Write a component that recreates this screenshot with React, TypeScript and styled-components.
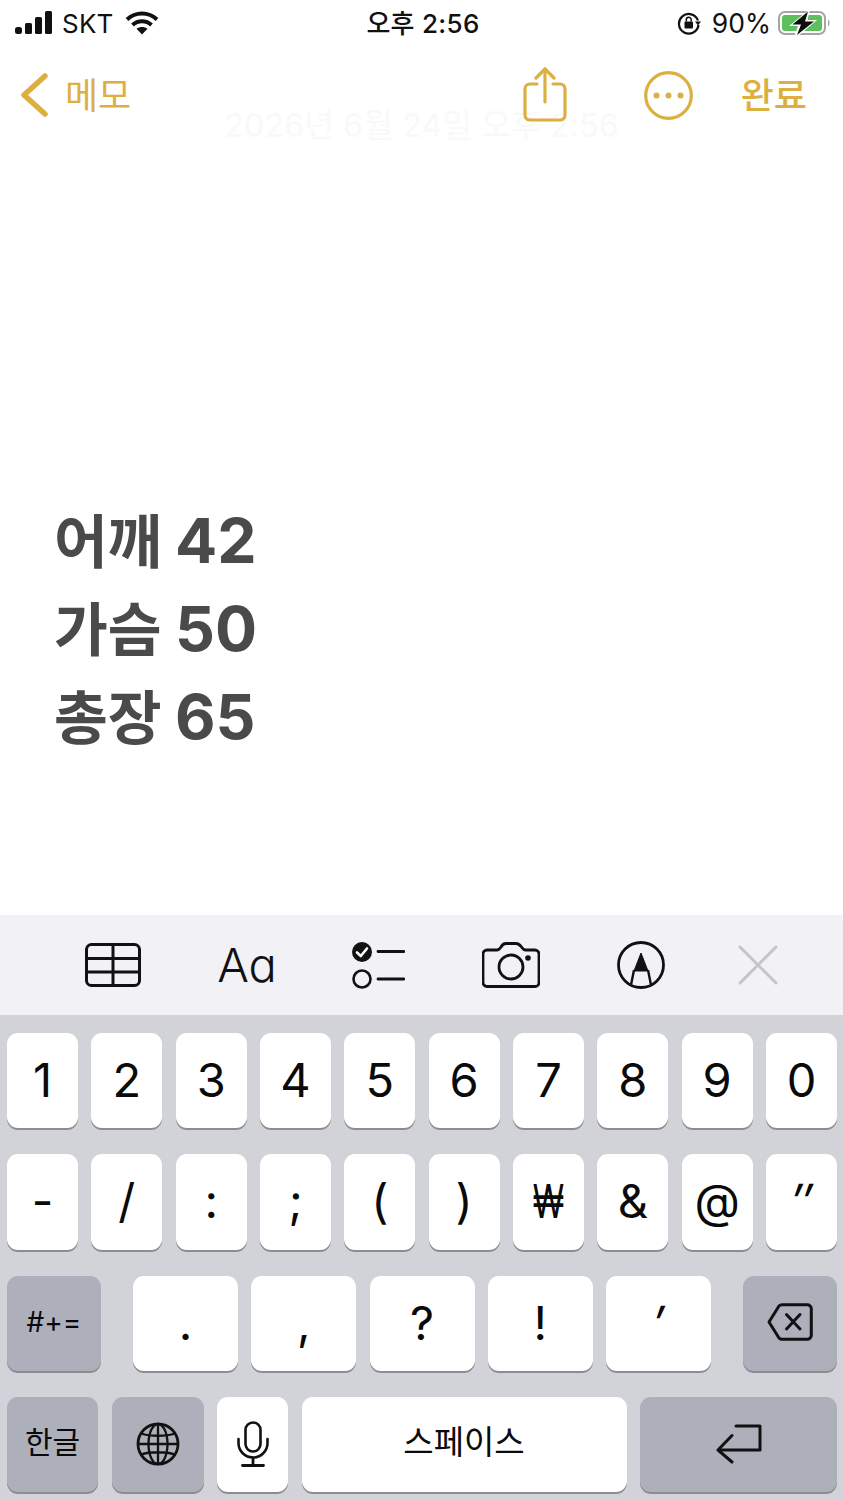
import React from "react";
import styled, { createGlobalStyle } from "styled-components";

const GOLD = "#dcb040";
const FONT = `Inter, "Noto Sans CJK KR", sans-serif`;
const KR = `"Noto Sans CJK KR", Inter, sans-serif`;

const Global = createGlobalStyle`
  html, body { margin: 0; padding: 0; background: #fff; }
  body { font-family: ${FONT}; }
`;

const Page = styled.div`
  width: 843px;
  height: 1500px;
  display: flex;
  flex-direction: column;
  overflow: hidden;
  background: #fff;
  color: #000;
`;

const StatusBar = styled.div`
  height: 46px;
  padding: 0 12px 0 15px;
  display: grid;
  grid-template-columns: 1fr auto 1fr;
  align-items: center;
  font-size: 27px;
  color: #111;
`;
const StatusLeft = styled.div`
  display: flex;
  align-items: center;
`;
const StatusRight = styled.div`
  display: flex;
  align-items: center;
  justify-content: flex-end;
`;
const Carrier = styled.span`
  margin: 0 11px 0 10px;
  font-size: 26px;
  letter-spacing: 0.2px;
`;
const Clock = styled.span`
  padding-bottom: 4px;
  font-size: 26px;
  font-weight: 500;
  font-family: ${FONT};
  letter-spacing: 0.3px;
`;
const Percent = styled.span`
  margin: 0 7px 0 11px;
  font-size: 26.5px;
`;

const Nav = styled.div`
  position: relative;
  isolation: isolate;
  height: 98px;
  padding: 0 36px 0 20px;
  display: flex;
  align-items: center;
  color: ${GOLD};
`;
const BackLabel = styled.span`
  margin-left: 17px;
  padding-bottom: 4px;
  font-family: ${KR};
  font-size: 36px;
  font-weight: 400;
`;
const Spacer = styled.div`
  flex: 1;
`;
const MoreWrap = styled.span`
  display: flex;
  margin: 0 48px 0 77px;
`;
const Done = styled.span`
  padding-bottom: 4px;
  font-family: ${KR};
  font-size: 36px;
  font-weight: 500;
`;
const FadedTitle = styled.div`
  position: absolute;
  z-index: -1;
  left: 0;
  right: 0;
  top: 60px;
  text-align: center;
  font-family: ${FONT};
  font-size: 32.4px;
  line-height: 40px;
  color: #f9f9f9;
`;

const Note = styled.div`
  flex: 1;
  padding: 350px 0 0 54px;
`;
const NoteLine = styled.div`
  height: 88px;
  line-height: 88px;
  font-family: Inter, ${KR};
  font-size: 62.5px;
  font-weight: 700;
  color: #4a4a4a;
  white-space: nowrap;
`;
const Hangul = styled.span`
  margin-right: -1.5px;
  font-family: ${KR};
  font-size: 58.5px;
`;

const Toolbar = styled.div`
  flex: 0 0 100px;
  padding-left: 85px;
  display: flex;
  align-items: center;
  background: #f2f2f6;
`;
const Tool = styled.span<{ $gap?: number }>`
  display: flex;
  margin-left: ${(p) => p.$gap ?? 0}px;
`;
const FontTool = styled(Tool)`
  width: 58px;
  justify-content: center;
  font-family: Inter, sans-serif;
  font-size: 47px;
  line-height: 56px;
  font-weight: 300;
  font-feature-settings: "cv11" 1;
  color: #111;
`;

const Keyboard = styled.div`
  flex: 0 0 485px;
  box-sizing: border-box;
  padding: 18px 6px 8px 7px;
  display: flex;
  flex-direction: column;
  gap: 26px;
  background: #d1d3d9;
`;
const Row = styled.div`
  flex: 1;
  display: flex;
  gap: 13.33px;
`;
const SplitRow = styled(Row)`
  justify-content: space-between;
`;
const RowGroup = styled.div`
  display: flex;
  gap: 13.25px;
`;
const BottomRow = styled(Row)`
  gap: 13.5px;
`;
const Key = styled.div<{ $w?: number; $dark?: boolean; $size?: number; $lift?: number }>`
  flex: ${(p) => (p.$w ? `0 0 ${p.$w}px` : "1 1 0")};
  min-width: 0;
  display: flex;
  align-items: center;
  justify-content: center;
  border-radius: 11px;
  background: ${(p) => (p.$dark ? "#adb0bb" : "#fff")};
  box-shadow: 0 2px 0 #8c8d92;
  font-family: ${FONT};
  font-size: ${(p) => p.$size ?? 47}px;
  font-weight: 400;
  color: #0a0a0a;
  padding-bottom: ${(p) => p.$lift ?? 2}px;
  box-sizing: border-box;
`;
const KeyHangul = styled.span<{ $size: number }>`
  font-family: ${KR};
  font-size: ${(p) => p.$size}px;
  font-weight: 400;
`;
const WonSign = styled.span`
  display: inline-block;
  transform: scaleX(0.7);
`;
const SlantMark = styled.span`
  display: inline-block;
  transform: skewX(-14deg);
`;

const Signal = () => (
  <svg width="37" height="24" viewBox="0 0 37 24">
    <rect x="0" y="16" width="7" height="7" rx="2.5" fill="#111" />
    <rect x="10" y="12" width="7" height="11" rx="1.5" fill="#111" />
    <rect x="20" y="6" width="7" height="17" rx="1.5" fill="#111" />
    <rect x="30" y="0" width="7" height="23" rx="1.5" fill="#111" />
  </svg>
);
const Wifi = () => (
  <svg width="34" height="24" viewBox="0 0 34 24" fill="none" stroke="#111" strokeWidth="4">
    <path d="M2 8.5C10.5 0.5 23.5 0.5 32 8.5" />
    <path d="M7.5 14C13 9 21 9 26.500 14" />
    <path d="M17 23.500L11.500 17.800C14.500 15.300 19.500 15.300 22.500 17.800Z" fill="#111" stroke="none" />
  </svg>
);
const RotationLock = () => (
  <svg width="24" height="24" viewBox="0 0 24 24" fill="none">
    <path d="M21 9.500A9.800 9.800 0 1 0 21.500 14" stroke="#111" strokeWidth="2.200" />
    <path d="M18 10.500L24 10.500L21 14.500Z" fill="#111" />
    <rect x="7.500" y="10.500" width="8.500" height="7" rx="1" fill="#111" />
    <path d="M9.300 10.500V8.800A2.400 2.400 0 0 1 14.200 8.800V10.500" stroke="#111" strokeWidth="1.500" />
  </svg>
);
const Battery = () => (
  <svg width="53" height="28" viewBox="0 0 53 28">
    <rect x="1" y="3" width="46" height="22" rx="6" fill="none" stroke="#a5a5a5" strokeWidth="2" />
    <rect x="4" y="6" width="40" height="16" rx="3" fill="#5cc05f" />
    <path d="M50 10.500C52 11 52 17 50 17.500Z" fill="#a5a5a5" />
    <path d="M32 0L11 17H20L16 28H19L39 11H29.500L32 0Z" fill="#fff" />
    <path d="M30 2.500L14.500 15.500H23L19 26L36 12.500H27Z" fill="#0d0d0d" />
  </svg>
);

const Chevron = () => (
  <svg width="28" height="44" viewBox="0 0 28 44" fill="none" stroke={GOLD} strokeWidth="5.500" strokeLinecap="round" strokeLinejoin="round">
    <path d="M25 3L4 22L25 41" />
  </svg>
);
const ShareIcon = () => (
  <svg width="44" height="56" viewBox="0 0 44 56" fill="none" stroke={GOLD} strokeWidth="3.200" strokeLinecap="round" strokeLinejoin="round">
    <path d="M14 17H7A5 5 0 0 0 2 22V48A5 5 0 0 0 7 53H37A5 5 0 0 0 42 48V22A5 5 0 0 0 37 17H30" />
    <path d="M22 2V35" />
    <path d="M13 11L22 2L31 11" />
  </svg>
);
const MoreIcon = () => (
  <svg width="49" height="49" viewBox="0 0 49 49" fill="none">
    <circle cx="24.500" cy="24.500" r="22.800" stroke={GOLD} strokeWidth="3.200" />
    <circle cx="12.500" cy="24.500" r="3" fill={GOLD} />
    <circle cx="24.500" cy="24.500" r="3" fill={GOLD} />
    <circle cx="36.500" cy="24.500" r="3" fill={GOLD} />
  </svg>
);

const TableIcon = () => (
  <svg width="56" height="44" viewBox="0 0 56 44" fill="none" stroke="#111" strokeWidth="3">
    <rect x="1.500" y="1.500" width="53" height="41" rx="5" />
    <path d="M28 2V42M2 15.500H54M2 29H54" />
  </svg>
);
const ChecklistIcon = () => (
  <svg width="54" height="48" viewBox="0 0 54 48" fill="none">
    <circle cx="11" cy="11" r="10" fill="#111" />
    <path d="M6 11.500L9.800 15L16 7.500" stroke="#fff" strokeWidth="2.600" strokeLinecap="round" strokeLinejoin="round" />
    <circle cx="11" cy="38" r="8.500" stroke="#111" strokeWidth="2.600" />
    <path d="M27 10.500H53M27 38H53" stroke="#111" strokeWidth="2.800" strokeLinecap="round" />
  </svg>
);
const CameraIcon = () => (
  <svg width="58" height="46" viewBox="0 0 58 46" fill="none" stroke="#111" strokeWidth="2.800" strokeLinejoin="round">
    <path d="M5 8H15C17 8 18 6.500 19 5C20 3 21.500 1.500 24 1.500H34C36.500 1.500 38 3 39.500 5C40.500 6.500 41.500 8 43.500 8H53A4 4 0 0 1 57 12V40.500A4 4 0 0 1 53 44.500H5A4 4 0 0 1 1 40.500V12A4 4 0 0 1 5 8Z" />
    <circle cx="29" cy="25" r="12" />
    <circle cx="46" cy="16" r="2.800" fill="#111" stroke="none" />
  </svg>
);
const PenIcon = () => (
  <svg width="48" height="48" viewBox="0 0 48 48" fill="none" stroke="#111" strokeLinejoin="round">
    <circle cx="24" cy="24" r="22.500" strokeWidth="2.800" />
    <path d="M24 12L17 30H31Z" fill="#111" strokeWidth="1" />
    <path d="M17 29L14 44M31 29L34 44" strokeWidth="2.400" />
  </svg>
);
const CloseIcon = () => (
  <svg width="40" height="40" viewBox="0 0 40 40" fill="none" stroke="#c5c5c8" strokeWidth="3" strokeLinecap="round">
    <path d="M2 2L38 38M38 2L2 38" />
  </svg>
);

const DeleteIcon = () => (
  <svg width="46" height="38" viewBox="0 0 46 38" fill="none" stroke="#111" strokeWidth="3" strokeLinecap="round" strokeLinejoin="round">
    <path d="M15 1.800H40A4 4 0 0 1 44.300 5.800V32A4 4 0 0 1 40 36.200H15C14 36.200 13 35.800 12 35L2 19L12 3C13 2.200 14 1.800 15 1.800Z" />
    <path d="M19.500 11.500L33 26M33 11.500L19.500 26" />
  </svg>
);
const GlobeIcon = () => (
  <svg width="44" height="44" viewBox="0 0 44 44" fill="none" stroke="#111" strokeWidth="2.300">
    <circle cx="22" cy="22" r="20" strokeWidth="2.800" />
    <ellipse cx="22" cy="22" rx="9.500" ry="20" />
    <path d="M22 2V42M2 22H42M5 11.500C14 14.500 30 14.500 39 11.500M5 32.500C14 29.500 30 29.500 39 32.500" />
  </svg>
);
const MicIcon = () => (
  <svg width="32" height="46" viewBox="0 0 32 46" fill="none" stroke="#111" strokeWidth="2.600" strokeLinecap="round">
    <rect x="8.500" y="1.500" width="15" height="29" rx="7.500" />
    <path d="M1.500 18V22A14.500 14.500 0 0 0 30.500 22V18" />
    <path d="M16 37V44M5.500 44.500H26.500" strokeWidth="2.800" />
  </svg>
);
const ReturnIcon = () => (
  <svg width="46" height="40" viewBox="0 0 46 40" fill="none" stroke="#111" strokeWidth="3" strokeLinecap="round" strokeLinejoin="round">
    <path d="M20 2H44V26H3" />
    <path d="M16 11.500L2 26L16 38" />
  </svg>
);

const ROW1 = ["1", "2", "3", "4", "5", "6", "7", "8", "9", "0"];
const ROW2A = ["-", "/", ":", ";", "(", ")"];
const ROW2B = ["&", "@"];
const ROW3 = [".", ",", "?", "!"];

export default function App() {
  return (
    <Page>
      <Global />
      <StatusBar>
        <StatusLeft>
          <Signal />
          <Carrier>SKT</Carrier>
          <Wifi />
        </StatusLeft>
        <Clock>오후 2:56</Clock>
        <StatusRight>
          <RotationLock />
          <Percent>90%</Percent>
          <Battery />
        </StatusRight>
      </StatusBar>
      <Nav>
        <FadedTitle>2026년 6월 24일 오후 2:56</FadedTitle>
        <Chevron />
        <BackLabel>메모</BackLabel>
        <Spacer />
        <ShareIcon />
        <MoreWrap>
          <MoreIcon />
        </MoreWrap>
        <Done>완료</Done>
      </Nav>
      <Note>
        <NoteLine><Hangul>어깨</Hangul> 42</NoteLine>
        <NoteLine><Hangul>가슴</Hangul> 50</NoteLine>
        <NoteLine><Hangul>총장</Hangul> 65</NoteLine>
      </Note>
      <Toolbar>
        <Tool><TableIcon /></Tool>
        <FontTool $gap={77}>Aa</FontTool>
        <Tool $gap={75}><ChecklistIcon /></Tool>
        <Tool $gap={77}><CameraIcon /></Tool>
        <Tool $gap={77}><PenIcon /></Tool>
        <Tool $gap={73}><CloseIcon /></Tool>
      </Toolbar>
      <Keyboard>
        <Row>
          {ROW1.map((k) => <Key key={k}>{k}</Key>)}
        </Row>
        <Row>
          {ROW2A.map((k) => <Key key={k}>{k}</Key>)}
          <Key><WonSign>₩</WonSign></Key>
          {ROW2B.map((k) => <Key key={k}>{k}</Key>)}
          <Key><SlantMark>″</SlantMark></Key>
        </Row>
        <SplitRow>
          <Key $w={94} $dark $size={28}>#+=</Key>
          <RowGroup>
            {ROW3.map((k) => <Key key={k} $w={105}>{k}</Key>)}
            <Key $w={105}><SlantMark>′</SlantMark></Key>
          </RowGroup>
          <Key $w={94} $dark><DeleteIcon /></Key>
        </SplitRow>
        <BottomRow>
          <Key $w={91} $dark $lift={8}><KeyHangul $size={30}>한글</KeyHangul></Key>
          <Key $w={92} $dark $lift={0}><GlobeIcon /></Key>
          <Key $w={71} $lift={0}><MicIcon /></Key>
          <Key $w={325} $lift={8}><KeyHangul $size={33}>스페이스</KeyHangul></Key>
          <Key $w={197} $dark $lift={0}><ReturnIcon /></Key>
        </BottomRow>
      </Keyboard>
    </Page>
  );
}
